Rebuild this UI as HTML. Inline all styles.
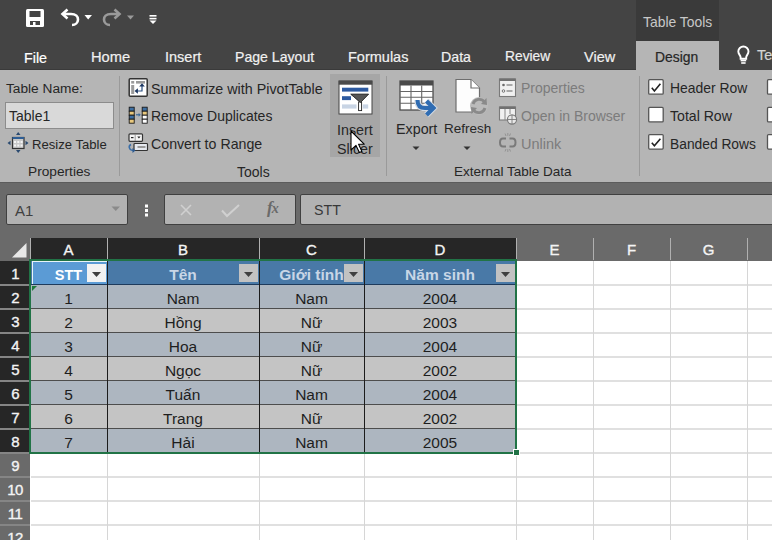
<!DOCTYPE html>
<html><head><meta charset="utf-8">
<style>
*{margin:0;padding:0;box-sizing:border-box}
html,body{width:772px;height:540px;overflow:hidden;background:#fff;font-family:"Liberation Sans",sans-serif}
.a{position:absolute;white-space:nowrap}
.tab{color:#f0f0f0;font-size:14.3px;top:49px;-webkit-text-stroke:0.2px currentColor}
.rt{color:#262626;font-size:13.2px}
.dis{color:#7c7c7c}
.sep{width:1px;background:#9a9a9a;top:76px;height:100px}
.box{background:#b2b2b2;border:1px solid #4a4a4a;border-radius:2px}
.ch{top:238px;height:22px;color:#f4f4f4;font-size:15px;-webkit-text-stroke:0.35px #f4f4f4;text-align:center;line-height:23px}
.rh{left:0;width:30px;height:24px;color:#f4f4f4;font-size:15px;-webkit-text-stroke:0.35px #f4f4f4;letter-spacing:-0.6px;text-align:center;line-height:26px}
.cell{height:20px;font-size:15.5px;color:#1e1e1e;text-align:center;line-height:20px}
.hd{height:20px;font-size:15.5px;font-weight:bold;text-align:center;line-height:20px}

</style></head><body>
<div class="a" style="left:0;top:0;width:772px;height:70px;background:#444"></div>
<div class="a" style="left:636px;top:0;width:83px;height:41px;background:#3a3a3a"></div>
<div class="a" style="left:643px;top:14px;color:#c8c8c8;font-size:13.9px">Table Tools</div>
<div class="a" style="left:636px;top:41px;width:83px;height:30px;background:#b5b5b5"></div>
<!-- QAT -->
<svg class="a" style="left:0;top:0" width="170" height="40">
 <rect x="26" y="9" width="18" height="18" rx="1.5" fill="#fff"/>
 <rect x="29.5" y="11" width="11" height="6" fill="#444"/>
 <rect x="30" y="21" width="10" height="4" fill="#444"/>
 <rect x="33" y="22" width="2.5" height="3" fill="#fff"/>
 <path d="M63,14 L71,14 C76,14 78,17 78,19.5 C78,22.5 75.5,25 72,25" fill="none" stroke="#fff" stroke-width="2.6"/>
 <path d="M67.5,9.5 L62.5,14 L67.5,18.5" fill="none" stroke="#fff" stroke-width="2.6"/>
 <polygon points="84.5,15 92,15 88.2,19.5" fill="#fff"/>
 <path d="M119,14 L111,14 C106,14 104,17 104,19.5 C104,22.5 106.5,25 110,25" fill="none" stroke="#9a9a9a" stroke-width="2.6"/>
 <path d="M114.5,9.5 L119.5,14 L114.5,18.5" fill="none" stroke="#9a9a9a" stroke-width="2.6"/>
 <polygon points="127,15.5 134,15.5 130.5,19.5" fill="#9a9a9a"/>
 <rect x="149.5" y="15" width="7" height="1.6" fill="#fff"/>
 <rect x="149.5" y="17.8" width="7" height="1.6" fill="#fff"/>
 <polygon points="149.5,20.5 156.5,20.5 153,24" fill="#fff"/>
</svg>
<div class="a tab" style="left:24px;top:50px;color:#fff;font-size:14.3px">File</div>
<div class="a tab" style="left:91px;font-size:14.7px">Home</div>
<div class="a tab" style="left:165px;font-size:14.5px">Insert</div>
<div class="a tab" style="left:235px;font-size:14.1px">Page Layout</div>
<div class="a tab" style="left:348px;font-size:14.5px">Formulas</div>
<div class="a tab" style="left:441px;font-size:14.2px">Data</div>
<div class="a tab" style="left:505px;font-size:13.8px">Review</div>
<div class="a tab" style="left:584px;font-size:14.5px">View</div>
<div class="a tab" style="left:655px;color:#262626;font-size:13.9px">Design</div>
<svg class="a" style="left:730px;top:42px" width="24" height="26">
 <path d="M10.6,16.8 L10.6,15.2 C10.6,13.6 8.3,12.3 8.3,9.6 A5.1,5.1 0 1 1 18.5,9.6 C18.5,12.3 16.2,13.6 16.2,15.2 L16.2,16.8 Z" fill="none" stroke="#fff" stroke-width="1.9"/>
 <rect x="10.6" y="17.6" width="5.6" height="1.8" fill="#fff"/>
 <rect x="11.2" y="20.2" width="4.4" height="1.6" fill="#fff"/>
</svg>
<div class="a tab" style="left:757px;top:47px;color:#d4d4d4;font-size:14.5px">Te</div>

<div class="a" style="left:0;top:70px;width:772px;height:112px;background:#b5b5b5"></div>
<div class="a" style="left:0;top:69px;width:636px;height:1px;background:#3a3a3a"></div>
<div class="a rt" style="left:6px;top:81px;font-size:13.7px">Table Name:</div>
<div class="a" style="left:5px;top:102px;width:109px;height:27px;background:#d9d9d9;border:1px solid #8c8c8c"></div>
<div class="a rt" style="left:9px;top:108px;font-size:14px">Table1</div>
<svg class="a" style="left:6px;top:130px" width="24" height="24">
 <rect x="6.5" y="7.5" width="11.5" height="11" fill="#c8c8c8" stroke="#333" stroke-width="1.2"/>
 <rect x="6.5" y="7" width="11.5" height="2" fill="#2e5e95"/>
 <g fill="#f4f4f4"><rect x="8" y="11" width="2" height="2"/><rect x="11.3" y="11" width="2" height="2"/><rect x="14.6" y="11" width="2" height="2"/><rect x="8" y="14.5" width="2" height="2"/><rect x="11.3" y="14.5" width="2" height="2"/><rect x="14.6" y="14.5" width="2" height="2"/></g>
 <g fill="#2a4a70"><polygon points="12.2,2 14.5,5 10,5"/><polygon points="12.2,23 14.5,20 10,20"/><polygon points="1.5,13 4.5,10.7 4.5,15.3"/><polygon points="22.5,13 19.5,10.7 19.5,15.3"/></g>
</svg>
<div class="a rt" style="left:32px;top:137px;font-size:13.1px">Resize Table</div>
<div class="a rt" style="left:28px;top:164px;font-size:13.7px">Properties</div>
<div class="a sep" style="left:119px"></div>

<svg class="a" style="left:124px;top:74px" width="28" height="82">
 <rect x="5.2" y="4.8" width="18" height="17.5" rx="1" fill="#fff" stroke="#333" stroke-width="1.5"/>
 <rect x="7.2" y="7" width="3" height="2.6" fill="#9a9a9a"/>
 <rect x="12" y="7" width="9" height="2.6" fill="#9a9a9a"/>
 <rect x="7.2" y="11" width="3" height="9" fill="#9a9a9a"/>
 <path d="M18,11.5 L18,17 L12.5,17" fill="none" stroke="#2a4f80" stroke-width="1.2"/>
 <polygon points="18,9.2 20.8,12.6 15.2,12.6" fill="#1a3560"/>
 <polygon points="10.5,17 13.9,14.2 13.9,19.8" fill="#1a3560"/>
 <g stroke="#1a1a1a" stroke-width="0.9">
  <rect x="5.2" y="33.2" width="5" height="4" fill="#3d6fa3"/><rect x="5.2" y="37.2" width="5" height="4" fill="#e9c97e"/><rect x="5.2" y="41.2" width="5" height="4" fill="#3d6fa3"/><rect x="5.2" y="45.2" width="5" height="4" fill="#e9c97e"/>
  <rect x="18.2" y="33.2" width="5" height="4" fill="#3d6fa3"/><rect x="18.2" y="37.2" width="5" height="4" fill="#e9c97e"/><rect x="18.2" y="41.2" width="5" height="4" fill="#fff"/><rect x="18.2" y="45.2" width="5" height="4" fill="#fff"/>
 </g>
 <path d="M12,40.8 L15.2,40.8" stroke="#3a6a9a" stroke-width="1.2"/>
 <polygon points="16.8,40.8 14.6,38.9 14.6,42.7" fill="#3a6a9a"/>
 <rect x="5" y="59.8" width="13.5" height="7.5" rx="1" fill="#f4f4f4" stroke="#333" stroke-width="1.2"/>
 <path d="M11.2,60 L11.2,67" stroke="#888" stroke-width="0.8"/>
 <rect x="7" y="63" width="2.5" height="1.2" fill="#222"/>
 <polygon points="13.3,62.5 16.5,62.5 14.9,64.5" fill="#222"/>
 <rect x="10" y="69.5" width="13.5" height="7" rx="0.8" fill="#e6eaf0" stroke="#333" stroke-width="1.2"/>
 <rect x="13.5" y="72" width="8" height="2" fill="#9a9a9a"/>
 <path d="M7,70.5 C4,72 5,76 9,76.5" fill="none" stroke="#3a6ea8" stroke-width="1.6"/>
 <polygon points="11.5,76.5 8.5,74 8.5,79" fill="#2d5a90"/>
</svg>
<div class="a rt" style="left:151px;top:81px;font-size:14.3px">Summarize with PivotTable</div>
<div class="a rt" style="left:151px;top:108px;font-size:14px">Remove Duplicates</div>
<div class="a rt" style="left:151px;top:136px;font-size:14.2px">Convert to Range</div>
<div class="a rt" style="left:237px;top:164px;font-size:14px">Tools</div>
<div class="a" style="left:330px;top:74px;width:50px;height:83px;background:#a6a6a6"></div>
<svg class="a" style="left:334px;top:76px" width="42" height="42">
 <rect x="5" y="5" width="33" height="33" fill="#fff" stroke="#444" stroke-width="1"/>
 <rect x="4.7" y="4.7" width="33.6" height="4" fill="#4a4a4a"/>
 <rect x="8" y="11.7" width="26.3" height="3.9" fill="#2d5aa0"/>
 <rect x="8" y="20.2" width="9" height="3.9" fill="#2d5aa0"/>
 <rect x="8" y="28.4" width="14.5" height="4.2" fill="#c8d4e4"/>
 <rect x="28.8" y="28.4" width="5.4" height="4.2" fill="#c8d4e4"/>
 <polygon points="16,17.5 35.5,17.5 27.5,27 27.5,35 24.5,35 24.5,27" fill="#fff"/>
 <polygon points="16.8,18.2 34.5,18.2 26.5,26.5" fill="#555" stroke="#222" stroke-width="0.6"/>
 <rect x="24.6" y="26" width="3" height="8.6" fill="#fff" stroke="#222" stroke-width="0.9"/>
 <polygon points="16.8,18.2 34.5,18.2 26.5,26.5" fill="#555" stroke="#222" stroke-width="0.6"/>
</svg>
<div class="a rt" style="left:337px;top:122px;font-size:14.3px">Insert</div>
<div class="a rt" style="left:337px;top:141px;font-size:14.3px">Slicer</div>
<svg class="a" style="left:346px;top:126px" width="22" height="30">
 <polygon points="5,5 5,24 10,19.4 13.4,26.6 15.8,25.4 12.6,18.2 18.2,18.2" fill="#fff" stroke="#000" stroke-width="1.1" stroke-linejoin="round"/>
</svg>
<div class="a sep" style="left:386px"></div>

<svg class="a" style="left:396px;top:76px" width="44" height="44">
 <rect x="4" y="5" width="33" height="29" fill="#fff" stroke="#444" stroke-width="1.2"/>
 <rect x="4" y="5" width="33" height="4.5" fill="#4a4a4a"/>
 <g stroke="#666" stroke-width="1.1"><path d="M15,9.5 V34 M25.7,9.5 V34 M4,15.5 H37 M4,21.2 H37 M4,27.3 H37"/></g>
 <path d="M21.5,24 C21.5,29.5 24,32 29,32 L36,32 M30.5,25 L37.5,32 L30.5,39" fill="none" stroke="#d4dae2" stroke-width="6.2"/>
 <path d="M21.5,24 C21.5,29.5 24,32 29,32 L36,32" fill="none" stroke="#2f6cb2" stroke-width="4"/>
 <path d="M30.5,25 L37.5,32 L30.5,39" fill="none" stroke="#2f6cb2" stroke-width="4.2"/>
</svg>
<div class="a rt" style="left:396px;top:121px;font-size:14.3px">Export</div>

<svg class="a" style="left:450px;top:76px" width="44" height="44">
 <path d="M6,3.5 L21,3.5 L29.5,12 L29.5,36 L6,36 Z" fill="#fdfdfd" stroke="#6e6e6e" stroke-width="1.2"/>
 <path d="M21,3.5 L21,12 L29.5,12" fill="#fff" stroke="#6e6e6e" stroke-width="1.2"/>
 <circle cx="29" cy="30" r="9" fill="#bbb"/>
 <path d="M23,28 A6.5,6.5 0 0 1 34.5,26" fill="none" stroke="#8a8a8a" stroke-width="2.8"/>
 <path d="M35,32 A6.5,6.5 0 0 1 23.5,34" fill="none" stroke="#8a8a8a" stroke-width="2.8"/>
 <polygon points="36.5,22 37,29 31,28" fill="#8a8a8a"/>
 <polygon points="21.5,38 21,31 27,32" fill="#8a8a8a"/>
</svg>
<div class="a rt" style="left:444px;top:121px;font-size:13.5px">Refresh</div>
<svg class="a" style="left:390px;top:140px" width="100" height="14">
 <polygon points="22.5,6.5 29.5,6.5 26,10" fill="#333"/>
 <polygon points="73.5,6.5 80.5,6.5 77,10" fill="#333"/>
</svg>
<svg class="a" style="left:494px;top:74px" width="28" height="80">
 <rect x="5.5" y="5" width="16" height="17.5" fill="#f0f0f0" stroke="#7a7a7a" stroke-width="1.1"/>
 <rect x="5.5" y="4.5" width="16" height="2.5" fill="#707070"/>
 <circle cx="9.5" cy="11" r="1.3" fill="#6a6a6a"/><rect x="12.5" y="10.4" width="6" height="1.2" fill="#7a7a7a"/>
 <circle cx="9.5" cy="17" r="1.3" fill="none" stroke="#6a6a6a" stroke-width="0.9"/><rect x="12.5" y="16.4" width="6" height="1.2" fill="#7a7a7a"/>
 <rect x="5.5" y="33" width="16" height="13" fill="#f0f0f0" stroke="#7a7a7a" stroke-width="1.1"/>
 <rect x="5.5" y="32.5" width="16" height="2.5" fill="#707070"/>
 <path d="M11,35 V46 M16,35 V40" stroke="#888" stroke-width="1"/>
 <circle cx="18" cy="45.5" r="4.6" fill="#e8e8e8" stroke="#7a7a7a" stroke-width="1.1"/>
 <path d="M13.4,45.5 H22.6 M18,41 V50" stroke="#7a7a7a" stroke-width="0.9"/>
 <g fill="none" stroke="#7a7a7a" stroke-width="2"><path d="M12,64.5 H9 C6,64.5 6,68.5 6,68.5 C6,68.5 6,72.5 9,72.5 H12"/><path d="M15.5,64.5 H18.5 C21.5,64.5 21.5,68.5 21.5,68.5 C21.5,68.5 21.5,72.5 18.5,72.5 H15.5"/></g>
 <g stroke="#8a8a8a" stroke-width="0.8"><path d="M11,59.5 L12,62 M13.8,59 V61.8 M16.5,59.5 L15.5,62 M11,77.5 L12,75 M13.8,78 V75.2 M16.5,77.5 L15.5,75"/></g>
</svg>
<div class="a rt dis" style="left:521px;top:80px;font-size:14px">Properties</div>
<div class="a rt dis" style="left:521px;top:108px;font-size:14px">Open in Browser</div>
<div class="a rt dis" style="left:521px;top:136px;font-size:14.5px">Unlink</div>
<div class="a rt" style="left:454px;top:164px;font-size:13.5px">External Table Data</div>
<div class="a sep" style="left:639px"></div>

<svg class="a" style="left:640px;top:74px" width="132" height="82">
 <g fill="#fff" stroke="#555" stroke-width="1.3">
  <rect x="8.7" y="5.7" width="14.5" height="14.5" rx="1"/>
  <rect x="8.7" y="33.4" width="14.5" height="14.5" rx="1"/>
  <rect x="8.7" y="60.6" width="14.5" height="14.5" rx="1"/>
  <rect x="127.5" y="5.7" width="14.5" height="14.5" rx="1"/>
  <rect x="127.5" y="33.4" width="14.5" height="14.5" rx="1"/>
  <rect x="127.5" y="60.6" width="14.5" height="14.5" rx="1"/>
 </g>
 <path d="M11.8,13.8 L14.4,16.9 L20.4,9.8" fill="none" stroke="#222" stroke-width="1.6"/>
 <path d="M11.8,68.7 L14.4,71.8 L20.4,64.7" fill="none" stroke="#222" stroke-width="1.6"/>
</svg>
<div class="a rt" style="left:670px;top:80px;font-size:13.9px">Header Row</div>
<div class="a rt" style="left:670px;top:108px;font-size:14.1px">Total Row</div>
<div class="a rt" style="left:670px;top:137px;font-size:13.8px">Banded Rows</div>

<div class="a" style="left:0;top:182px;width:772px;height:56px;background:#6a6a6a;border-top:1px solid #5c5c5c"></div>
<div class="a box" style="left:6px;top:194px;width:122px;height:31px;border-color:#404040"></div>
<div class="a" style="left:15px;top:202px;color:#404040;font-size:15px">A1</div>
<svg class="a" style="left:100px;top:200px" width="24" height="20"><polygon points="11.5,6.5 20,6.5 15.75,11" fill="#8a8a8a"/></svg>
<svg class="a" style="left:140px;top:200px" width="14" height="22"><g fill="#fff"><rect x="5" y="4.5" width="3" height="3"/><rect x="5" y="9" width="3" height="3"/><rect x="5" y="13.5" width="3" height="3"/></g></svg>
<div class="a box" style="left:164px;top:194px;width:132px;height:31px;border-color:#404040"></div>
<svg class="a" style="left:164px;top:195px" width="132" height="30">
 <path d="M17,10 L27,20 M27,10 L17,20" stroke="#d0d0d0" stroke-width="1.6"/>
 <path d="M58,15.5 L63,21 L75,10" fill="none" stroke="#d0d0d0" stroke-width="2"/>
</svg>
<div class="a" style="left:267px;top:198px;font-family:'Liberation Serif',serif;font-style:italic;font-weight:bold;color:#6a6a6a;font-size:17px;letter-spacing:-1px">f<span style="font-size:14px">x</span></div>
<div class="a box" style="left:300px;top:194px;width:480px;height:31px;border-color:#404040"></div>
<div class="a" style="left:314px;top:202px;color:#383838;font-size:14.2px">STT</div>
<div class="a" style="left:0;top:238px;width:772px;height:23px;background:#6a6a6a"></div>
<div class="a" style="left:30px;top:238px;width:486px;height:22px;background:#262626"></div>
<div class="a" style="left:30px;top:238px;width:1px;height:22px;background:#b0b0b0"></div>
<div class="a" style="left:107px;top:238px;width:1px;height:22px;background:#b0b0b0"></div>
<div class="a" style="left:259px;top:238px;width:1px;height:22px;background:#b0b0b0"></div>
<div class="a" style="left:364px;top:238px;width:1px;height:22px;background:#b0b0b0"></div>
<div class="a" style="left:516px;top:238px;width:1px;height:22px;background:#b0b0b0"></div>
<div class="a" style="left:593px;top:238px;width:1px;height:22px;background:#b0b0b0"></div>
<div class="a" style="left:670px;top:238px;width:1px;height:22px;background:#b0b0b0"></div>
<div class="a" style="left:747px;top:238px;width:1px;height:22px;background:#b0b0b0"></div>
<div class="a ch" style="left:30px;width:77px">A</div>
<div class="a ch" style="left:107px;width:152px">B</div>
<div class="a ch" style="left:259px;width:105px">C</div>
<div class="a ch" style="left:364px;width:152px">D</div>
<div class="a ch" style="left:516px;width:77px">E</div>
<div class="a ch" style="left:593px;width:77px">F</div>
<div class="a ch" style="left:670px;width:77px">G</div>
<svg class="a" style="left:0;top:238px" width="30" height="23"><polygon points="26.5,5 26.5,19.5 12,19.5" fill="#e8e8e8"/></svg>
<div class="a" style="left:0;top:261px;width:30px;height:279px;background:#6a6a6a"></div>
<div class="a" style="left:0;top:261px;width:30px;height:192px;background:#262626"></div>
<div class="a rh" style="top:261px">1</div>
<div class="a" style="left:0;top:284px;width:30px;height:2px;background:#858585"></div>
<div class="a rh" style="top:285px">2</div>
<div class="a" style="left:0;top:308px;width:30px;height:2px;background:#858585"></div>
<div class="a rh" style="top:309px">3</div>
<div class="a" style="left:0;top:332px;width:30px;height:2px;background:#858585"></div>
<div class="a rh" style="top:333px">4</div>
<div class="a" style="left:0;top:356px;width:30px;height:2px;background:#858585"></div>
<div class="a rh" style="top:357px">5</div>
<div class="a" style="left:0;top:380px;width:30px;height:2px;background:#858585"></div>
<div class="a rh" style="top:381px">6</div>
<div class="a" style="left:0;top:404px;width:30px;height:2px;background:#858585"></div>
<div class="a rh" style="top:405px">7</div>
<div class="a" style="left:0;top:428px;width:30px;height:2px;background:#858585"></div>
<div class="a rh" style="top:429px">8</div>
<div class="a" style="left:0;top:452px;width:30px;height:2px;background:#858585"></div>
<div class="a rh" style="top:453px">9</div>
<div class="a" style="left:0;top:476px;width:30px;height:2px;background:#858585"></div>
<div class="a rh" style="top:477px">10</div>
<div class="a" style="left:0;top:500px;width:30px;height:2px;background:#858585"></div>
<div class="a rh" style="top:501px">11</div>
<div class="a" style="left:0;top:524px;width:30px;height:2px;background:#858585"></div>
<div class="a rh" style="top:525px">12</div>
<div class="a" style="left:0;top:548px;width:30px;height:2px;background:#858585"></div>
<div class="a" style="left:31px;top:284px;width:741px;height:2px;background:#e0e0e0"></div>
<div class="a" style="left:31px;top:308px;width:741px;height:2px;background:#e0e0e0"></div>
<div class="a" style="left:31px;top:332px;width:741px;height:2px;background:#e0e0e0"></div>
<div class="a" style="left:31px;top:356px;width:741px;height:2px;background:#e0e0e0"></div>
<div class="a" style="left:31px;top:380px;width:741px;height:2px;background:#e0e0e0"></div>
<div class="a" style="left:31px;top:404px;width:741px;height:2px;background:#e0e0e0"></div>
<div class="a" style="left:31px;top:428px;width:741px;height:2px;background:#e0e0e0"></div>
<div class="a" style="left:31px;top:452px;width:741px;height:2px;background:#e0e0e0"></div>
<div class="a" style="left:31px;top:476px;width:741px;height:2px;background:#e0e0e0"></div>
<div class="a" style="left:31px;top:500px;width:741px;height:2px;background:#e0e0e0"></div>
<div class="a" style="left:31px;top:524px;width:741px;height:2px;background:#e0e0e0"></div>
<div class="a" style="left:31px;top:548px;width:741px;height:2px;background:#e0e0e0"></div>
<div class="a" style="left:107px;top:261px;width:1px;height:279px;background:#d6d6d6"></div>
<div class="a" style="left:259px;top:261px;width:1px;height:279px;background:#d6d6d6"></div>
<div class="a" style="left:364px;top:261px;width:1px;height:279px;background:#d6d6d6"></div>
<div class="a" style="left:516px;top:261px;width:1px;height:279px;background:#d6d6d6"></div>
<div class="a" style="left:593px;top:261px;width:1px;height:279px;background:#d6d6d6"></div>
<div class="a" style="left:670px;top:261px;width:1px;height:279px;background:#d6d6d6"></div>
<div class="a" style="left:747px;top:261px;width:1px;height:279px;background:#d6d6d6"></div>
<div class="a" style="left:31px;top:261px;width:485px;height:24px;background:#4979a7"></div>
<div class="a" style="left:31px;top:284px;width:485px;height:2px;background:#1f3b5c"></div>
<div class="a" style="left:31px;top:285px;width:485px;height:24px;background:#adb6c0"></div>
<div class="a" style="left:31px;top:308px;width:485px;height:2px;background:#4d4d4d"></div>
<div class="a" style="left:31px;top:309px;width:485px;height:24px;background:#c4c4c4"></div>
<div class="a" style="left:31px;top:332px;width:485px;height:2px;background:#4d4d4d"></div>
<div class="a" style="left:31px;top:333px;width:485px;height:24px;background:#adb6c0"></div>
<div class="a" style="left:31px;top:356px;width:485px;height:2px;background:#4d4d4d"></div>
<div class="a" style="left:31px;top:357px;width:485px;height:24px;background:#c4c4c4"></div>
<div class="a" style="left:31px;top:380px;width:485px;height:2px;background:#4d4d4d"></div>
<div class="a" style="left:31px;top:381px;width:485px;height:24px;background:#adb6c0"></div>
<div class="a" style="left:31px;top:404px;width:485px;height:2px;background:#4d4d4d"></div>
<div class="a" style="left:31px;top:405px;width:485px;height:24px;background:#c4c4c4"></div>
<div class="a" style="left:31px;top:428px;width:485px;height:2px;background:#4d4d4d"></div>
<div class="a" style="left:31px;top:429px;width:485px;height:24px;background:#adb6c0"></div>
<div class="a" style="left:31px;top:452px;width:485px;height:2px;background:#4d4d4d"></div>
<div class="a" style="left:32px;top:261px;width:75px;height:23px;background:#e8f4f8"></div>
<div class="a" style="left:33px;top:262px;width:74px;height:22px;background:#5b9bd5"></div>
<svg class="a" style="left:32px;top:286px" width="8" height="8"><polygon points="0,0 5,0 0,5" fill="#1f7a3a"/></svg>
<div class="a" style="left:107px;top:261px;width:1px;height:192px;background:#1c1c1c"></div>
<div class="a" style="left:259px;top:261px;width:1px;height:192px;background:#1c1c1c"></div>
<div class="a" style="left:364px;top:261px;width:1px;height:192px;background:#1c1c1c"></div>
<div class="a hd" style="left:30px;top:265px;width:77px;color:#ffffff;font-size:14.5px">STT</div>
<div class="a hd" style="left:107px;top:265px;width:152px;color:#c8d6e6;font-size:15.5px">Tên</div>
<div class="a hd" style="left:259px;top:265px;width:105px;color:#c8d6e6;font-size:15.5px">Giới tính</div>
<div class="a hd" style="left:364px;top:265px;width:152px;color:#c8d6e6;font-size:15.5px">Năm sinh</div>
<div class="a" style="left:87px;top:264px;width:19px;height:18px;background:#f2f2f2"></div>
<svg class="a" style="left:87px;top:264px" width="19" height="18"><polygon points="5,8 14,8 9.5,13" fill="#404040"/></svg>
<div class="a" style="left:239px;top:264px;width:19px;height:18px;background:#c2c2c2"></div>
<svg class="a" style="left:239px;top:264px" width="19" height="18"><polygon points="5,8 14,8 9.5,13" fill="#404040"/></svg>
<div class="a" style="left:344px;top:264px;width:19px;height:18px;background:#c2c2c2"></div>
<svg class="a" style="left:344px;top:264px" width="19" height="18"><polygon points="5,8 14,8 9.5,13" fill="#404040"/></svg>
<div class="a" style="left:496px;top:264px;width:19px;height:18px;background:#c2c2c2"></div>
<svg class="a" style="left:496px;top:264px" width="19" height="18"><polygon points="5,8 14,8 9.5,13" fill="#404040"/></svg>
<div class="a cell" style="left:30px;top:289px;width:77px">1</div>
<div class="a cell" style="left:107px;top:289px;width:152px">Nam</div>
<div class="a cell" style="left:259px;top:289px;width:105px">Nam</div>
<div class="a cell" style="left:364px;top:289px;width:152px">2004</div>
<div class="a cell" style="left:30px;top:313px;width:77px">2</div>
<div class="a cell" style="left:107px;top:313px;width:152px">Hồng</div>
<div class="a cell" style="left:259px;top:313px;width:105px">Nữ</div>
<div class="a cell" style="left:364px;top:313px;width:152px">2003</div>
<div class="a cell" style="left:30px;top:337px;width:77px">3</div>
<div class="a cell" style="left:107px;top:337px;width:152px">Hoa</div>
<div class="a cell" style="left:259px;top:337px;width:105px">Nữ</div>
<div class="a cell" style="left:364px;top:337px;width:152px">2004</div>
<div class="a cell" style="left:30px;top:361px;width:77px">4</div>
<div class="a cell" style="left:107px;top:361px;width:152px">Ngọc</div>
<div class="a cell" style="left:259px;top:361px;width:105px">Nữ</div>
<div class="a cell" style="left:364px;top:361px;width:152px">2002</div>
<div class="a cell" style="left:30px;top:385px;width:77px">5</div>
<div class="a cell" style="left:107px;top:385px;width:152px">Tuấn</div>
<div class="a cell" style="left:259px;top:385px;width:105px">Nam</div>
<div class="a cell" style="left:364px;top:385px;width:152px">2004</div>
<div class="a cell" style="left:30px;top:409px;width:77px">6</div>
<div class="a cell" style="left:107px;top:409px;width:152px">Trang</div>
<div class="a cell" style="left:259px;top:409px;width:105px">Nữ</div>
<div class="a cell" style="left:364px;top:409px;width:152px">2002</div>
<div class="a cell" style="left:30px;top:433px;width:77px">7</div>
<div class="a cell" style="left:107px;top:433px;width:152px">Hải</div>
<div class="a cell" style="left:259px;top:433px;width:105px">Nam</div>
<div class="a cell" style="left:364px;top:433px;width:152px">2005</div>
<div class="a" style="left:29px;top:259px;width:488px;height:195px;border:2px solid #217346"></div>
<div class="a" style="left:513px;top:449px;width:7px;height:7px;background:#217346;border:1px solid #fff"></div>
</body></html>
